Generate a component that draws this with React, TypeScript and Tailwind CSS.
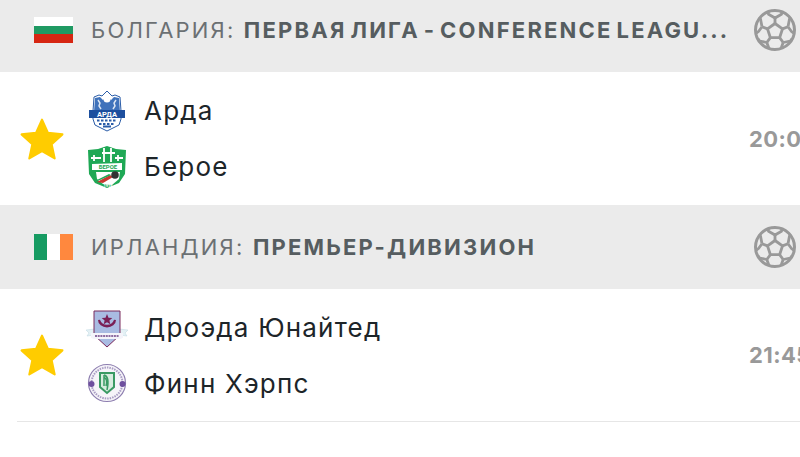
import React from 'react';

const Ball = () => (
  <svg viewBox="0 0 44 44" className="w-[44px] h-[44px] shrink-0" fill="none" stroke="#999999" strokeWidth="2.800" strokeLinejoin="round">
    <circle cx="22" cy="22" r="19.500" strokeWidth="3" />
    <path d="M22 15.500l7.500 5.400-2.900 8.800h-9.200l-2.900-8.800z" />
    <path d="M22 15.500V10M29.500 20.900l5.500-2.200M26.600 29.700l3.600 4.800M17.400 29.700l-3.600 4.800M14.500 20.900L9 18.700" />
    <path d="M22 10l-6.500-3.800-.5-3.200M22 10l6.500-3.800.5-3.200M35 18.700l1.500-7.700 2-1M35 18.700l3.500 4.800 2.500 2M30.200 34.500l7-1.500 2-2.500M30.200 34.500l-2.200 6M13.800 34.500l-7-1.500-2-2.500M13.800 34.500l2.200 6M9 18.700L7.500 11l-2-1M9 18.700l-3.500 4.800-2.500 2" />
  </svg>
);

const Star = () => (
  <svg viewBox="0 0 42 42" className="w-[44px] h-[44px]">
    <path d="M21 2.500l5.700 12.600 13.800 1.500-10.300 9.300 2.900 13.600-12.100-6.900-12.100 6.900 2.900-13.600L1.500 16.600l13.800-1.500z" fill="#ffcc00" stroke="#ffcc00" strokeWidth="2" strokeLinejoin="round" />
  </svg>
);

const Arda = () => (
  <svg viewBox="0 0 38 42" className="w-[38px] h-[42px]">
    <path d="M6 7l5-2 3 1 5-5 5 5 3-1 5 2 1 14v8l-2 6-12 6-12-6-2-6v-8z" fill="#ffffff" stroke="#2a5ca8" strokeWidth="1" />
    <path d="M7 8l5-1 3 3 4-4 4 4 3-3 5 1 1 14H6z" fill="#3f72bb" />
    <circle cx="19" cy="9" r="3.500" fill="#ffffff" />
    <path d="M10 10l2 3-1 3 2 3M28 10l-2 3 1 3-2 3" stroke="#dce6f3" strokeWidth="1.500" fill="none" />
    <path d="M1 20h36v8H1z" fill="#1d4f9e" />
    <text x="19" y="26.800" textAnchor="middle" fontSize="7.500" fontWeight="700" fill="#ffffff" fontFamily="Roboto, sans-serif">АРДА</text>
    <path d="M9 30.500h20M11 34h16" stroke="#2a5ca8" strokeWidth="2" strokeDasharray="2.500 1.500" />
    <path d="M15 36.500h8" stroke="#2a5ca8" strokeWidth="2" />
  </svg>
);

const Beroe = () => (
  <svg viewBox="0 0 40 44" className="w-[40px] h-[44px]">
    <path d="M1 5l10-1 9-3 9 3 10 1-1 24-6 9-12 5-12-5-6-9z" fill="#1fa855" />
    <path d="M4 13h10M7 10v6M17 3v14M24 3v14M15 8h13M31 10v6M28 13h8" stroke="#ffffff" strokeWidth="1.800" fill="none" />
    <path d="M5 19l30-1v7H5z" fill="#ffffff" />
    <text x="21" y="24.300" textAnchor="middle" fontSize="6" fontWeight="700" fill="#1fa855" fontFamily="Roboto, sans-serif">БЕРОЕ</text>
    <path d="M9 27h24l-1 7-7 6-9-1-6-5z" fill="#ffffff" />
    <path d="M10 37l13-7 3 2-10 6z" fill="#c9382f" />
    <path d="M10 35l12-6 2 1-11 5z" fill="#1fa855" />
    <circle cx="28" cy="30" r="3.800" fill="#333333" />
    <text x="21" y="42" textAnchor="middle" fontSize="4" fontWeight="700" fill="#ffffff" fontFamily="Roboto, sans-serif">1916</text>
  </svg>
);

const Drogheda = () => (
  <svg viewBox="0 0 44 38" className="w-[44px] h-[38px]">
    <path d="M1 20l9-1v6l-8 1 2-3zM43 20l-9-1v6l8 1-2-3z" fill="#e4f1f5" stroke="#bcd6e0" strokeWidth="0.500" />
    <path d="M9 1h26v24l-13 12L9 25z" fill="#a9bbe2" stroke="#7a2a5c" strokeWidth="1" />
    <path d="M14 10a8.500 8.500 0 0 0 16 0 8 6.500 0 0 1-16 0z" fill="#7a1f55" stroke="#7a1f55" strokeWidth="2" />
    <path d="M22 4l1.500 3.700 3.800.3-2.900 2.500.9 3.800-3.300-2-3.300 2 .9-3.800-2.900-2.500 3.800-.3z" fill="#7a1f55" />
    <path d="M6 23h32v5l-3 1H9l-3-1z" fill="#f4f4fa" />
    <path d="M10 26h24" stroke="#6b3f84" strokeWidth="1.300" strokeDasharray="2 0.700" />
  </svg>
);

const Finn = () => (
  <svg viewBox="0 0 40 40" className="w-[40px] h-[40px]">
    <circle cx="20" cy="20" r="18.500" fill="#f6f4f9" stroke="#8e7fb0" strokeWidth="1.200" />
    <circle cx="20" cy="20" r="15.500" fill="none" stroke="#a99dc4" strokeWidth="2" strokeDasharray="1.500 1" />
    <path d="M13 10h14v14l-7 6-7-6z" fill="#d8ecdf" stroke="#3a9a63" strokeWidth="2" />
    <path d="M17 12c4 1 5 6 3 15M17 12v11M17 14c3 2 3 6 2 9" stroke="#3a9a63" strokeWidth="1.500" fill="none" />
    <circle cx="4.500" cy="21" r="3" fill="#6e4f9e" />
    <circle cx="35.500" cy="21" r="3" fill="#6e4f9e" />
  </svg>
);

const Flag = ({ country }: { country: 'bg' | 'ie' }) =>
  country === 'bg' ? (
    <div className="w-[39px] h-[26px] flex flex-col shrink-0">
      <div className="flex-1 bg-white" />
      <div className="flex-1 bg-[#1f9a63]" />
      <div className="flex-1 bg-[#d62612]" />
    </div>
  ) : (
    <div className="w-[39px] h-[26px] flex shrink-0">
      <div className="flex-1 bg-[#169b62]" />
      <div className="flex-1 bg-white" />
      <div className="flex-1 bg-[#ff883e]" />
    </div>
  );

const LeagueHeader = ({ country, name, league }: { country: 'bg' | 'ie'; name: string; league: string }) => (
  <div className="h-[84px] bg-[#ebebeb] flex items-center pl-[34px] pr-[3px]">
    <Flag country={country} />
    <div className="flex-1 min-w-0 ml-[18px] mr-[22px] pb-px whitespace-nowrap text-[22px] leading-[30px] tracking-[2.2px] text-[#6b7073]">
      {name}: <span className="font-bold text-[#565d60] [word-spacing:-3.5px]">{league}</span>
    </div>
    <Ball />
  </div>
);

const TeamRow = ({ crest, name, crestClass }: { crest: React.ReactNode; name: string; crestClass?: string }) => (
  <div className="h-[56px] flex items-center">
    <div className={`w-[44px] flex justify-center shrink-0 ${crestClass ?? ''}`}>{crest}</div>
    <span className="ml-[15px] pb-[2px] text-[26px] tracking-[1.2px] text-[#1d2529]">{name}</span>
  </div>
);

const Match = ({ home, away, time, teamsClass, awayCrestClass }: { home: React.ReactNode[]; away: React.ReactNode[]; time: string; teamsClass?: string; awayCrestClass?: string }) => (
  <div className="h-[132px] flex items-center">
    <div className="w-[85px] pl-[20px] shrink-0 flex">
      <Star />
    </div>
    <div className={`flex-1 flex flex-col ${teamsClass ?? ''}`}>
      <TeamRow crest={home[0]} name={home[1] as string} />
      <TeamRow crest={away[0]} name={away[1] as string} crestClass={awayCrestClass} />
    </div>
    <div className="w-[51px] shrink-0 whitespace-nowrap text-[22px] font-bold tracking-[0.4px] text-[#999999]">{time}</div>
  </div>
);

export default function App() {
  return (
    <div className="w-[800px] h-[457px] overflow-hidden bg-white font-['Inter',sans-serif]">
      <div className="-mt-3">
        <LeagueHeader country="bg" name="БОЛГАРИЯ" league="ПЕРВАЯ ЛИГА - CONFERENCE LEAGU..." />
        <div className="pt-px">
          <Match home={[<Arda />, 'Арда']} away={[<Beroe />, 'Берое']} time="20:00" />
        </div>
        <LeagueHeader country="ie" name="ИРЛАНДИЯ" league="ПРЕМЬЕР-ДИВИЗИОН" />
        <Match teamsClass="pt-[3px]" awayCrestClass="pb-[4px]" home={[<Drogheda />, 'Дроэда Юнайтед']} away={[<Finn />, 'Финн Хэрпс']} time="21:45" />
        <div className="ml-[17px] h-px bg-[#e6e6e6]" />
      </div>
    </div>
  );
}
